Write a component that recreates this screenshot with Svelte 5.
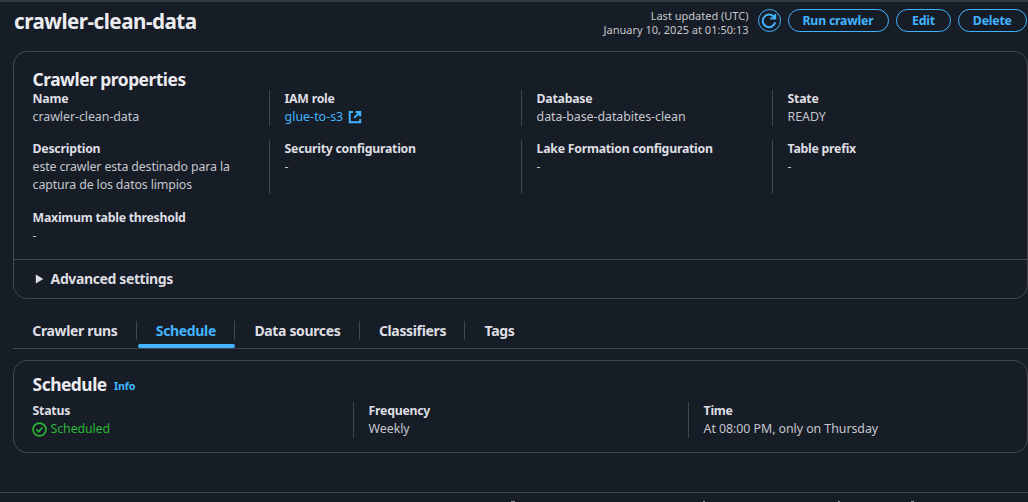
<script>
  const rows = [
    [
      { label: 'Name', value: 'crawler-clean-data' },
      { label: 'IAM role', value: 'glue-to-s3', link: true },
      { label: 'Database', value: 'data-base-databites-clean' },
      { label: 'State', value: 'READY' }
    ],
    [
      { label: 'Description', value: 'este crawler esta destinado para la captura de los datos limpios', long: true },
      { label: 'Security configuration', value: '-' },
      { label: 'Lake Formation configuration', value: '-' },
      { label: 'Table prefix', value: '-' }
    ],
    [{ label: 'Maximum table threshold', value: '-' }]
  ];
  const tabs = ['Crawler runs', 'Schedule', 'Data sources', 'Classifiers', 'Tags'];
  let active = $state('Schedule');
</script>

<main>
  <header>
    <h1>crawler-clean-data</h1>
    <div class="actions">
      <p class="updated">Last updated (UTC)<br />January 10, 2025 at 01:50:13</p>
      <button class="round" aria-label="Refresh">
        <svg width="16" height="16" viewBox="0 0 16 16"><path d="M14.2 9.3A6.3 6.3 0 1 1 12.6 3.5L14 5.2M14.2 1V5.6H9.2" /></svg>
      </button>
      <button>Run crawler</button>
      <button>Edit</button>
      <button>Delete</button>
    </div>
  </header>

  <section class="card properties">
    <div class="body">
      <h2>Crawler properties</h2>
      {#each rows as row}
        <div class="grid four">
          {#each row as item}
            <div class="cell">
              <div class="label">{item.label}</div>
              {#if item.link}
                <div class="value link">
                  <span>{item.value}</span>
                  <svg width="14" height="14" viewBox="0 0 14 14"><path d="M5 1.9H1.7V12.3H12.2V9M7.6 1.9H12.2V6.4M12 2.2L6.2 7.9" /></svg>
                </div>
              {:else}
                <div class="value" class:long={item.long}>{item.value}</div>
              {/if}
            </div>
          {/each}
        </div>
      {/each}
    </div>
    <div class="expander">
      <svg width="9" height="10" viewBox="0 0 9 10"><path d="M.8 .5V9.5L8.3 5Z" /></svg>
      <span>Advanced settings</span>
    </div>
  </section>

  <nav>
    {#each tabs as tab}
      <button class="tab" class:active={tab === active} onclick={() => (active = tab)}><span>{tab}</span></button>
    {/each}
  </nav>

  <section class="card schedule">
    <h2>Schedule <a href="#info">Info</a></h2>
    <div class="grid three">
      <div class="cell">
        <div class="label">Status</div>
        <div class="value ok">
          <svg width="15" height="15" viewBox="0 0 15 15"><circle cx="7.5" cy="7.5" r="6.4" /><path d="M4.3 7.4L6.7 9.8L10.5 5.2" /></svg>
          <span>Scheduled</span>
        </div>
      </div>
      <div class="cell">
        <div class="label">Frequency</div>
        <div class="value">Weekly</div>
      </div>
      <div class="cell">
        <div class="label">Time</div>
        <div class="value">At 08:00 PM, only on Thursday</div>
      </div>
    </div>
  </section>

  <footer><i></i><i></i><i></i><i></i></footer>
</main>

<style>
  :global(body) { background: #161d26; overflow: hidden; }
  * { box-sizing: border-box; }
  main {
    width: 1028px; height: 502px; overflow: hidden;
    display: flex; flex-direction: column;
    border-top: 2px solid #333843;
    font: 12.4px/18px 'Noto Sans', 'Open Sans', sans-serif;
    letter-spacing: -.06px;
    color: #c6c6cd;
  }
  h1, h2, p { margin: 0; }
  header { display: flex; justify-content: space-between; height: 49px; flex: none; padding-left: 14px; }
  h1 { font-size: 20.6px; line-height: 27px; letter-spacing: -.5px; color: #ebebf0; padding-top: 6px; }
  .actions { display: flex; padding: 7px 1px 0 0; }
  .updated { font-size: 11px; line-height: 14px; letter-spacing: 0; text-align: right; margin-right: 10px; }
  button { font-family: inherit; background: none; border: 0; padding: 0; }
  .actions button {
    height: 23px; border: 1.5px solid #42b4ff; border-radius: 12px; color: #42b4ff;
    font-size: 12.3px; font-weight: 700; line-height: 20px; letter-spacing: -.2px;
    width: 69.5px; margin-left: 7px; white-space: nowrap;
  }
  .actions button:nth-of-type(2) { width: 101px; }
  .actions button:nth-of-type(3) { width: 55px; padding-left: 1px; }
  .actions .round { width: 23px; margin: 0; display: grid; place-items: center; }
  .actions .round { margin-left: -1px; }
  svg { flex: none; fill: none; stroke: currentColor; stroke-width: 2; }

  .card { flex: none; margin-left: 13px; border: 1px solid #424650; border-radius: 14px; }
  .properties { height: 248px; display: flex; flex-direction: column; }
  .body { height: 207px; padding: 17px 0 0 18.6px; }
  h2 { font-size: 17.4px; line-height: 21px; letter-spacing: -.5px; color: #ebebf0; }
  .grid { display: grid; }
  .four { grid-template-columns: 236.4px 252px 251px 1fr; margin-bottom: 14px; }
  .four:nth-of-type(3) { margin-top: 15px; }
  .three { grid-template-columns: 320.4px 335px 1fr; margin-top: 5px; }
  .cell + .cell { border-left: 1px solid #424650; padding-left: 14.6px; }
  .label { font-size: 12.3px; font-weight: 700; letter-spacing: -.25px; color: #dedee3; }
  .long { width: 210px; letter-spacing: -.14px; }
  .link, .ok { display: flex; align-items: center; }
  .link { color: #42b4ff; gap: 5px; letter-spacing: .02px; }
  .expander {
    flex: 1; border-top: 1px solid #424650; display: flex; align-items: center; gap: 6.6px;
    padding-left: 21px; font-size: 14px; font-weight: 700; letter-spacing: -.38px; color: #dedee3;
  }
  .expander svg { fill: #dedee3; stroke: none; }

  nav { flex: none; display: flex; margin: 13px 0 11px 13px; height: 37px; border-bottom: 1px solid #424650; }
  .tab {
    position: relative; height: 36px; padding: 1px 19.2px 0 19.3px; color: #dedee3; white-space: nowrap;
    font-size: 14px; font-weight: 700; line-height: 36px; letter-spacing: -.35px;
  }
  .tab:not(:last-child)::before {
    content: ''; position: absolute; right: 0; top: 9px; width: 1px; height: 19px; background: #424650;
  }
  .tab.active { color: #42b4ff; }
  .tab.active::after {
    content: ''; position: absolute; left: 1px; right: 0; bottom: 0; height: 4px; border-radius: 3px; background: #42b4ff;
  }
  .schedule { height: 93px; padding: 13px 0 0 18.6px; }
  a { position: relative; top: -1px; font-size: 10.8px; letter-spacing: -.25px; color: #42b4ff; text-decoration: none; margin-left: 3.4px; }
  .ok { color: #2bb534; gap: 4px; letter-spacing: -.12px; }
  .ok svg { margin-left: -1px; stroke-width: 1.7; }
  footer { flex: none; display: flex; margin-top: 39px; height: 10px; border-top: 1px solid #424650; align-items: flex-end; padding-left: 511px; }
  footer i { flex: none; width: 4px; height: 1px; background: #8c8f96; margin-right: 188px; }
  footer i:nth-child(2) { width: 2px; margin-right: 133px; }
  footer i:nth-child(3) { width: 2px; margin-right: 71px; }
  footer i:nth-child(4) { width: 3px; }
</style>
